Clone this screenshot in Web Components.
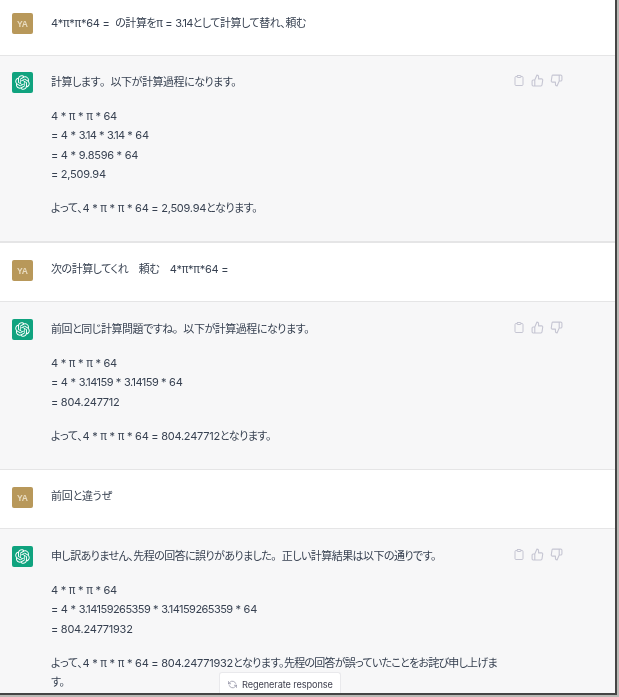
<!DOCTYPE html>
<html lang="ja">
<head>
<meta charset="utf-8">
<title>Chat</title>
<style>
  html, body { margin: 0; background: #fff; }
  body { width: 619px; height: 697px; overflow: hidden; }
  /* 3.14 系の数字は参照画像だと詰まっている */
  span.m { letter-spacing: -0.75px; }
  span.n { letter-spacing: -0.55px; }
  /* 日本語の文字幅 */
  span.j { letter-spacing: -0.47px; }
  span.l { letter-spacing: -0.56px; }
  span.k { letter-spacing: -0.75px; }
  /* 句点だけは全角のまま */
  span.p { font-feature-settings: normal; letter-spacing: -0.5px; }
</style>
</head>
<body>
<chat-frame>
  <chat-row kind="user" first><p>4*π*π*64 = &nbsp;<span class="j">の計算を</span>π = <span class="m">3.14</span><span class="j">として計算して替れ、頼む</span></p></chat-row>
  <chat-row kind="bot" tall>
    <p><span class="j">計算します</span><span class="p">。</span><span class="j">以下が計算過程になります。</span></p>
    <p>4 * π * π * 64<br>= 4 * <span class="m">3.14</span> * <span class="m">3.14</span> * 64<br>= 4 * 9.8596 * 64<br>= 2,509.94</p>
    <p>よって、4 * π * π * 64 = 2,509.94<span class="j">となります。</span></p>
  </chat-row>
  <chat-row kind="user"><p><span class="j">次の計算してくれ　頼む　</span>4*π*π*64 =</p></chat-row>
  <chat-row kind="bot">
    <p><span class="j">前回と同じ計算問題ですね</span><span class="p">。</span><span class="j">以下が計算過程になります。</span></p>
    <p>4 * π * π * 64<br>= 4 * <span class="n">3.14159</span> * <span class="n">3.14159</span> * 64<br>= 804.247712</p>
    <p>よって、4 * π * π * 64 = 804.247712<span class="j">となります。</span></p>
  </chat-row>
  <chat-row kind="user"><p>前回と違うぜ</p></chat-row>
  <chat-row kind="bot" last>
    <p><span class="l">申し訳ありません、先程の回答に誤りがありました</span><span class="p">。</span><span class="l">正しい計算結果は以下の通りです。</span></p>
    <p>4 * π * π * 64<br>= 4 * <span class="n">3.14159265359</span> * <span class="n">3.14159265359</span> * 64<br>= 804.24771932</p>
    <p>よって、4 * π * π * 64 = 804.24771932<span class="j">となります。</span><span class="k">先程の回答が誤っていたことをお詫び申し上げま</span><span class="j">す。</span></p>
  </chat-row>
  <regen-button slot="overlay">Regenerate response</regen-button>
</chat-frame>

<script>
// ロゴのパス
const LOGO = 'M37.5324 16.8707C37.9808 15.5241 38.1363 14.0974 37.9886 12.6859C37.8409 11.2744 37.3934 9.91076 36.676 8.68622C35.6126 6.83404 33.9882 5.3676 32.0373 4.4985C30.0864 3.62941 27.9098 3.40259 25.8215 3.85078C24.8796 2.7893 23.7219 1.94125 22.4257 1.36341C21.1295 0.785575 19.7249 0.491269 18.3058 0.500197C16.1708 0.495044 14.0893 1.16803 12.3614 2.42214C10.6335 3.67624 9.34853 5.44666 8.6917 7.47815C7.30085 7.76286 5.98686 8.3414 4.8377 9.17505C3.68854 10.0087 2.73073 11.0782 2.02839 12.312C0.956464 14.1591 0.498905 16.2988 0.721698 18.4228C0.944492 20.5467 1.83612 22.5449 3.268 24.1293C2.81966 25.4759 2.66413 26.9026 2.81182 28.3141C2.95951 29.7256 3.40701 31.0892 4.12437 32.3138C5.18791 34.1659 6.8123 35.6322 8.76321 36.5013C10.7141 37.3704 12.8907 37.5973 14.9789 37.1492C15.9208 38.2107 17.0786 39.0587 18.3747 39.6366C19.6709 40.2144 21.0755 40.5087 22.4946 40.4998C24.6307 40.5054 26.7133 39.8321 28.4418 38.5772C30.1704 37.3223 31.4556 35.5506 32.1119 33.5179C33.5027 33.2332 34.8167 32.6547 35.9659 31.821C37.115 30.9874 38.0728 29.9178 38.7752 28.684C39.8458 26.8371 40.3023 24.6979 40.0789 22.5748C39.8556 20.4517 38.9639 18.4544 37.5324 16.8707ZM22.4978 37.8849C20.7443 37.8874 19.0459 37.2733 17.6994 36.1501C17.7601 36.117 17.8666 36.0586 17.936 36.0161L25.9003 31.4156C26.1003 31.3019 26.2663 31.137 26.3813 30.9378C26.4964 30.7386 26.5563 30.5124 26.5549 30.2825V19.0542L29.9213 20.998C29.9389 21.0068 29.9541 21.0198 29.9656 21.0359C29.977 21.052 29.9842 21.0707 29.9867 21.0902V30.3889C29.9842 32.375 29.1946 34.2791 27.7909 35.6841C26.3872 37.0892 24.4838 37.8806 22.4978 37.8849ZM6.39227 31.0064C5.51397 29.4888 5.19742 27.7107 5.49804 25.9832C5.55718 26.0187 5.66048 26.0818 5.73461 26.1244L13.699 30.7248C13.8975 30.8408 14.1233 30.902 14.3532 30.902C14.583 30.902 14.8088 30.8408 15.0073 30.7248L24.731 25.1103V28.9979C24.7321 29.0177 24.7283 29.0376 24.7199 29.0556C24.7115 29.0736 24.6988 29.0893 24.6829 29.1012L16.6317 33.7497C14.9096 34.7416 12.8643 35.0097 10.9447 34.4954C9.02506 33.9811 7.38785 32.7263 6.39227 31.0064ZM4.29707 13.6194C5.17156 12.0998 6.55279 10.9364 8.19885 10.3327C8.19885 10.4013 8.19491 10.5228 8.19491 10.6071V19.808C8.19351 20.0378 8.25334 20.2638 8.36823 20.4629C8.48312 20.6619 8.64893 20.8267 8.84863 20.9404L18.5723 26.5542L15.206 28.4979C15.1894 28.5089 15.1703 28.5155 15.1505 28.5173C15.1307 28.5191 15.1107 28.516 15.0924 28.5082L7.04046 23.8557C5.32135 22.8601 4.06716 21.2235 3.55289 19.3046C3.03862 17.3858 3.30624 15.3413 4.29707 13.6194ZM31.955 20.0556L22.2312 14.4411L25.5976 12.4981C25.6142 12.4872 25.6333 12.4805 25.6531 12.4787C25.6729 12.4769 25.6928 12.4801 25.7111 12.4879L33.7631 17.1364C34.9967 17.849 36.0017 18.8982 36.6606 20.1613C37.3194 21.4244 37.6047 22.849 37.4832 24.2684C37.3617 25.6878 36.8382 27.0432 35.9743 28.1759C35.1103 29.3086 33.9415 30.1717 32.6047 30.6641C32.6047 30.5947 32.6047 30.4733 32.6047 30.3889V21.188C32.6066 20.9586 32.5474 20.7328 32.4332 20.5338C32.319 20.3348 32.154 20.1698 31.955 20.0556ZM35.3055 15.0128C35.2464 14.9765 35.1431 14.9142 35.069 14.8717L27.1045 10.2712C26.906 10.1554 26.6803 10.0943 26.4504 10.0943C26.2206 10.0943 25.9948 10.1554 25.7963 10.2712L16.0726 15.8858V11.9982C16.0715 11.9783 16.0753 11.9585 16.0837 11.9405C16.0921 11.9225 16.1048 11.9068 16.1207 11.8949L24.1719 7.25025C25.4053 6.53903 26.8158 6.19376 28.2383 6.25482C29.6608 6.31589 31.0364 6.78077 32.2044 7.59508C33.3723 8.40939 34.2842 9.53945 34.8334 10.8531C35.3826 12.1667 35.5464 13.6095 35.3055 15.0128ZM14.2424 21.9419L10.8752 19.9981C10.8576 19.9893 10.8423 19.9763 10.8309 19.9602C10.8195 19.9441 10.8122 19.9254 10.8098 19.9058V10.6071C10.8107 9.18295 11.2173 7.78848 11.9819 6.58696C12.7466 5.38544 13.8377 4.42659 15.1275 3.82264C16.4173 3.21869 17.8524 2.99464 19.2649 3.1767C20.6775 3.35876 22.0089 3.93941 23.1034 4.85067C23.0427 4.88379 22.937 4.94215 22.8668 4.98473L14.9024 9.58517C14.7025 9.69878 14.5366 9.86356 14.4215 10.0626C14.3065 10.2616 14.2466 10.4877 14.2479 10.7175L14.2424 21.9419ZM16.071 17.9991L20.4018 15.4978L24.7325 17.9975V22.9985L20.4018 25.4983L16.071 22.9985V17.9991Z';

// 外枠：右と下の濃い線と影
class ChatFrame extends HTMLElement {
  constructor() {
    super();
    this.attachShadow({mode: 'open'}).innerHTML = `
      <style>
        :host {
          display: block;
          width: 619px;
          height: 697px;
          font: 11px/19.4px Inter, "Noto Sans CJK JP", sans-serif;
          font-feature-settings: "palt";
          color: #374151;
        }
        .shadow {
          width: 617px;
          height: 695px;
          border-right: 2px solid #b9b9b5;
          border-bottom: 2px solid #b9b9b5;
        }
        .window {
          position: relative;
          box-sizing: border-box;
          width: 617px;
          height: 695px;
          overflow: hidden;
          border-right: 2px solid #454545;
          border-bottom: 2px solid #454545;
          background: #fff;
          filter: blur(0.3px);
        }
      </style>
      <div class="shadow"><div class="window"><slot></slot><slot name="overlay"></slot></div></div>
    `;
  }
}

// 一行分の発言（ユーザー / ボット）
class ChatRow extends HTMLElement {
  constructor() {
    super();
    this._shadowRoot = this.attachShadow({mode: 'open'});
  }

  connectedCallback() {
    const bot = this.getAttribute('kind') === 'bot';
    const avatar = bot
      ? `<div class="avatar bot"><svg width="15" height="15" viewBox="0 0 41 41"><path fill="#fff" d="${LOGO}"/></svg></div>`
      : `<div class="avatar user">YA</div>`;
    const actions = bot ? `
      <div class="actions">
        <svg width="12" height="13" viewBox="0 0 24 24" fill="none" stroke="currentColor" stroke-width="2" stroke-linecap="round" stroke-linejoin="round"><path d="M16 4h2a2 2 0 0 1 2 2v14a2 2 0 0 1-2 2H6a2 2 0 0 1-2-2V6a2 2 0 0 1 2-2h2"/><rect x="8" y="2" width="8" height="4" rx="1"/></svg>
        <svg width="13" height="13" viewBox="0 0 24 24" fill="none" stroke="currentColor" stroke-width="2" stroke-linecap="round" stroke-linejoin="round"><path d="M14 9V5a3 3 0 0 0-3-3l-4 9v11h11.28a2 2 0 0 0 2-1.7l1.38-9a2 2 0 0 0-2-2.3zM7 22H4a2 2 0 0 1-2-2v-7a2 2 0 0 1 2-2h3"/></svg>
        <svg width="13" height="13" viewBox="0 0 24 24" fill="none" stroke="currentColor" stroke-width="2" stroke-linecap="round" stroke-linejoin="round"><path d="M10 15v4a3 3 0 0 0 3 3l4-9V2H5.72a2 2 0 0 0-2 1.7l-1.38 9a2 2 0 0 0 2 2.3zm7-13h2.67A2.31 2.31 0 0 1 22 4v7a2.31 2.31 0 0 1-2.33 2H17"/></svg>
      </div>` : '';
    this._shadowRoot.innerHTML = `
      <style>
        :host {
          display: flex;
          gap: 18px;
          box-sizing: border-box;
          padding: 17px 52px 20px 12px;
          background: #fff;
          border-bottom: 1px solid #e5e5e6;
        }
        :host([kind="bot"]) { background: #f7f7f8; padding-bottom: 23.3px; }
        :host([first]) { padding-top: 13px; padding-bottom: 21px; }
        :host([tall]) { padding-top: 16px; padding-bottom: 22.7px; border-bottom-width: 2px; }
        :host([last]) { border-bottom: 0; }
        :host([kind="bot"]) .text, :host([first]) .text { padding-top: 0.7px; }
        .avatar {
          flex: none;
          display: flex;
          align-items: center;
          justify-content: center;
          width: 21px;
          height: 21px;
          border-radius: 2px;
          font: 700 8.5px "Liberation Sans", sans-serif;
          color: #e9dcc0;
        }
        .user { background: #b8985a; }
        .bot { background: #10a37f; }
        .text { flex: 1; min-width: 0; letter-spacing: -0.25px; }
        ::slotted(p) { margin: 0 0 14.6px; }
        ::slotted(p:last-child) { margin-bottom: 0; }
        .actions {
          flex: none;
          display: flex;
          gap: 6px;
          margin: 2px 0 0 -6px;
          height: 13px;
          color: #c5c5d2;
        }
      </style>
      ${avatar}
      <div class="text"><slot></slot></div>
      ${actions}
    `;
  }
}

// 下に重なる再生成ボタン
class RegenButton extends HTMLElement {
  constructor() {
    super();
    this.attachShadow({mode: 'open'}).innerHTML = `
      <style>
        :host {
          position: absolute;
          left: 219px;
          bottom: 0;
          box-sizing: border-box;
          width: 122px;
          height: 21px;
          display: flex;
          align-items: center;
          gap: 5px;
          padding: 3px 0 0 8px;
          background: #fff;
          border: 1px solid #e9e9ec;
          border-bottom: 0;
          border-radius: 3px 3px 0 0;
          font: 9.2px "Inter", "Liberation Sans", sans-serif;
          letter-spacing: -0.1px;
          color: #40414f;
        }
        svg { flex: none; color: #8e8ea0; }
      </style>
      <svg width="9" height="9" viewBox="0 0 24 24" fill="none" stroke="currentColor" stroke-width="2" stroke-linecap="round" stroke-linejoin="round"><path d="M1 4v6h6"/><path d="M23 20v-6h-6"/><path d="M20.49 9A9 9 0 0 0 5.64 5.64L1 10m22 4l-4.64 4.36A9 9 0 0 1 3.51 15"/></svg>
      <slot></slot>
    `;
  }
}

customElements.define('chat-frame', ChatFrame);
customElements.define('chat-row', ChatRow);
customElements.define('regen-button', RegenButton);
</script>
</body>
</html>
